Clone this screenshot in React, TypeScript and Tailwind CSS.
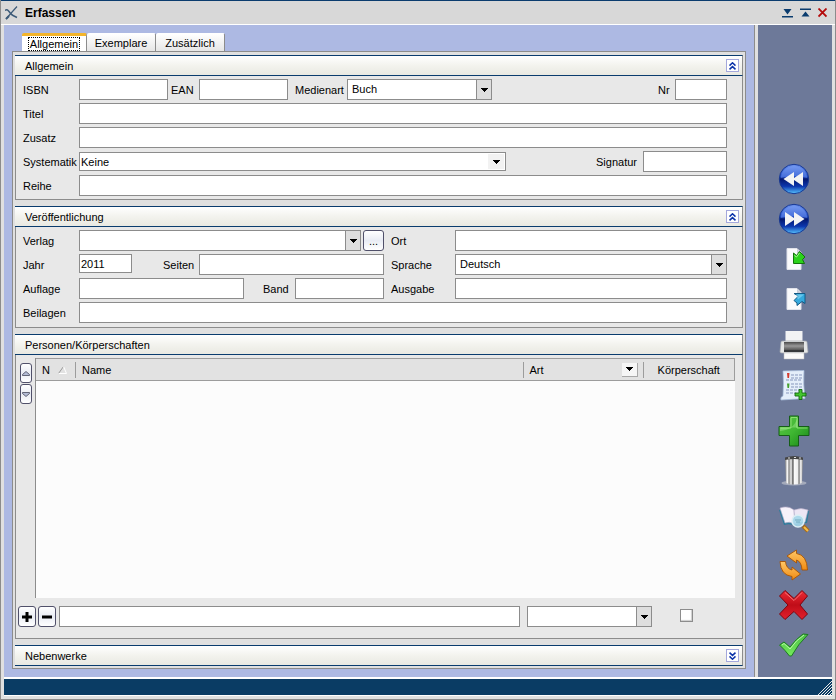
import { useState } from "react";
import type { ReactNode } from "react";

const INPUT = "min-w-0 border border-[#8c8c8c] bg-white outline-none";

/* ---------- form parts ---------- */

interface TextFieldProps {
  id: string;
  label: string;
  labelClass?: string;
  inputClass?: string;
  value?: string;
}

const TextField = ({ id, label, labelClass = "w-14", inputClass = "h-[21px] flex-1 px-1", value = "" }: TextFieldProps) => (
  <>
    <label htmlFor={id} className={`shrink-0 ${labelClass}`}>
      {label}
    </label>
    <input id={id} type="text" defaultValue={value} className={`${INPUT} ${inputClass}`} />
  </>
);

interface ComboProps {
  id: string;
  options: string[];
  className: string;
  flat?: boolean;
  ariaLabel?: string;
}

const Arrow = () => (
  <svg width="7" height="4" viewBox="0 0 7 4" shapeRendering="crispEdges">
    <path d="M0 0H7V1H6V2H5V3H4V4H3V3H2V2H1V1H0Z" fill="#000" />
  </svg>
);

const Combo = ({ id, options, className, flat, ariaLabel }: ComboProps) => (
  <div className={`relative border border-[#8c8c8c] bg-white ${className}`}>
    <select
      id={id}
      aria-label={ariaLabel}
      className={`block h-full w-full appearance-none bg-transparent outline-none ${flat ? "pl-px" : "pb-0.5 pl-1"}`}
    >
      {options.map((o) => (
        <option key={o}>{o}</option>
      ))}
    </select>
    <span
      className={
        flat
          ? "pointer-events-none absolute inset-y-px right-px flex w-4 items-center justify-center bg-[#f2f2f2]"
          : "pointer-events-none absolute inset-y-0 right-0 flex w-[15px] items-center justify-center border-l border-[#8c8c8c] bg-[#dedede]"
      }
    >
      <Arrow />
    </span>
  </div>
);

interface SmallButtonProps {
  label: string;
  className: string;
  children: ReactNode;
}

const SmallButton = ({ label, className, children }: SmallButtonProps) => (
  <button
    type="button"
    aria-label={label}
    className={`flex shrink-0 items-center justify-center rounded-[3px] border border-[#50506a] bg-linear-to-b from-white via-[#e9ecf4] to-white ${className}`}
  >
    {children}
  </button>
);

/* ---------- collapsible group ---------- */

interface GroupProps {
  title: string;
  toggle?: "up" | "down";
  className?: string;
  bodyClass?: string;
  children?: ReactNode;
}

const Group = ({ title, toggle, className = "", bodyClass = "", children }: GroupProps) => (
  <section className={`flex flex-col ${className}`}>
    <header className="flex h-[21px] shrink-0 items-center justify-between border-y border-r border-y-[#0a3c6e] border-r-[#8c8c8c] bg-linear-to-b from-white via-[#f3f3ee] to-[#e9e9e2] pr-[3px] pl-[10px]">
      <h2>{title}</h2>
      {toggle && (
        <button
          type="button"
          aria-label={toggle === "up" ? `${title} zuklappen` : `${title} aufklappen`}
          className="flex size-[13px] items-center justify-center border border-[#a4a8dc] bg-white"
        >
          <svg width="7" height="8" viewBox="0 0 7 8" fill="none" stroke="#0a32a8" strokeWidth="1.500">
            {toggle === "up" ? (
              <path d="M.5 3.600 3.500.8l3 2.800M.5 7.400l3-2.800 3 2.800" />
            ) : (
              <path d="M.5.6l3 2.800 3-2.800M.5 4.400l3 2.800 3-2.800" />
            )}
          </svg>
        </button>
      )}
    </header>
    {children && (
      <div className={`flex flex-col border-x border-b border-[#8c8c8c] bg-[#e8e8e8] ${bodyClass}`}>{children}</div>
    )}
  </section>
);

/* ---------- toolbar icons ---------- */

const RoundIcon = ({ forward }: { forward?: boolean }) => (
  <svg width="32" height="32" viewBox="0 0 32 32">
    <defs>
      <linearGradient id="ball" x1="0" y1="0" x2="0" y2="1">
        <stop offset="0" stopColor="#6d93ee" />
        <stop offset=".42" stopColor="#2350cb" />
        <stop offset=".5" stopColor="#04176d" />
        <stop offset=".75" stopColor="#0c37ae" />
        <stop offset="1" stopColor="#58c4ff" />
      </linearGradient>
    </defs>
    <circle cx="16" cy="16" r="14.700" fill="url(#ball)" stroke="#173790" />
    <path d="M3 15a13 12 0 0 1 26 0Q16 11 3 15Z" fill="#9ab8ff" opacity=".3" />
    <path
      d={forward ? "M7 9l9 6V9l10.500 7L16 23v-6l-9 6Z" : "M25 9l-9 6V9L5.500 16 16 23v-6l9 6Z"}
      fill="#f4f4f4"
    />
  </svg>
);

const PageIcon = ({ out }: { out?: boolean }) => (
  <svg width="32" height="32" viewBox="0 0 32 32">
    <path d="M9 5.500h10l4 4V26.500H9Z" fill="#fafafc" stroke="#e0e2ea" />
    <path d="M19 6v4h4Z" fill="#c8ccd8" />
    {out ? (
      <>
        <path d="M16 10.500h11v10l-3-2-5 4v-2.500l-3-2.500 4.500-4.500Z" fill="#35a9dd" stroke="#125a86" />
        <path d="M18 11.500h8l-6 5Z" fill="#8bdcf8" opacity=".6" />
      </>
    ) : (
      <>
        <path d="M15.500 20.500V10l3 2.500 3-4L27 14l-2.500 2.500 2 4Z" fill="#2bd21b" stroke="#12740c" />
        <path d="M16.500 12.500l2 1.500 3-4" fill="none" stroke="#a2f58e" />
      </>
    )}
  </svg>
);

const PrinterIcon = () => (
  <svg width="32" height="32" viewBox="0 0 32 32">
    <defs>
      <linearGradient id="prn" x1="0" y1="0" x2="0" y2="1">
        <stop offset="0" stopColor="#4a4a4a" />
        <stop offset=".5" stopColor="#999" />
        <stop offset="1" stopColor="#555" />
      </linearGradient>
    </defs>
    <path d="M7.500 2h17v12h-17Z" fill="#f2f3f4" />
    <path d="M3 13q0-1 2-1h22q2 0 2 1l1 10q0 1-2 1H4q-2 0-2-1Z" fill="#e4e6e6" stroke="#a4a8ae" strokeWidth=".7" />
    <path d="M6 13h20v8H6Z" fill="url(#prn)" />
    <path d="M6 21h20v2H6Z" fill="#36393c" />
    <path d="M6 24h20v6H6Z" fill="#fafafa" stroke="#bbb" strokeWidth=".5" />
  </svg>
);

const ListIcon = () => (
  <svg width="32" height="32" viewBox="0 0 32 32">
    <path d="M5 2l21-.5q-1 13 1 28L3 31q-1-3 2-4 1-13 0-25Z" fill="#e4eefa" stroke="#a9bfdc" strokeWidth=".7" />
    <path
      d="M13 6h11M13 9h11M8 11h16M13 15h11M13 18h11M8 21h14M8 24h10"
      stroke="#8797bd"
      strokeWidth="1"
      strokeDasharray="3 1"
    />
    <path d="M9 4h2.500L11 9H9.500Z" fill="#d43a2d" />
    <path d="M9 14.500h2.500l-.5 4.500H9.500Z" fill="#45a12e" />
    <path d="M21 20.500h3V24h4v3h-4v3.500h-3V27h-4v-3h4Z" fill="#43c52e" stroke="#12680e" strokeWidth=".9" />
  </svg>
);

const PlusIcon = () => (
  <svg width="32" height="32" viewBox="0 0 32 32">
    <defs>
      <linearGradient id="plus" x1="0" y1="0" x2="1" y2="1">
        <stop offset="0" stopColor="#5fc648" />
        <stop offset=".5" stopColor="#3fb632" />
        <stop offset="1" stopColor="#178416" />
      </linearGradient>
    </defs>
    <path d="M11.500 1h9v10.500H31v9H20.500V31h-9V20.500H1v-9h10.500Z" fill="url(#plus)" stroke="#155e17" />
    <path d="M13 2.500h6V13h10.500M2.500 13H13V3" fill="none" stroke="#a5ec8a" opacity=".7" />
    <path d="M2 12.500h17.500V2.500Q16 15 2 16Z" fill="#c4f5b0" opacity=".35" />
  </svg>
);

const TrashIcon = () => (
  <svg width="32" height="32" viewBox="0 0 32 32">
    <defs>
      <linearGradient id="bin">
        <stop offset="0" stopColor="#777" />
        <stop offset=".13" stopColor="#fff" />
        <stop offset=".22" stopColor="#888" />
        <stop offset=".34" stopColor="#eee" />
        <stop offset=".44" stopColor="#555" />
        <stop offset=".52" stopColor="#fafafa" />
        <stop offset=".7" stopColor="#eee" />
        <stop offset=".78" stopColor="#777" />
        <stop offset=".88" stopColor="#fff" />
        <stop offset="1" stopColor="#777" />
      </linearGradient>
    </defs>
    <ellipse cx="16" cy="28" rx="12.500" ry="2.500" fill="#a4aabb" />
    <path d="M7 3h18l-1 25q-8 3-16 0Z" fill="url(#bin)" />
    <path d="M7 2.500q9-3 18 0V5q-9-2-18 0Z" fill="#454545" />
    <path d="M10 3h2m4-.5h2m3 .5h2" stroke="#ddd" />
  </svg>
);

const BookIcon = () => (
  <svg width="32" height="32" viewBox="0 0 32 32">
    <path d="M1 7l5 15q6-2 11 1 5-3 12-3L31 8Z" fill="#2e7d9c" />
    <path d="M2 5q8-3 14 2l1 14q-6-3-10-1Z" fill="#f6f2fa" stroke="#b8adc9" strokeWidth=".6" />
    <path d="M16 7q7-3 14 0l-3 12q-6-1-10 2Z" fill="#ece6f4" stroke="#b8adc9" strokeWidth=".6" />
    <path d="M25 23l5 5" stroke="#a96b14" strokeWidth="4" />
    <path d="M26 24l4 4" stroke="#f4bd4d" strokeWidth="2" />
    <circle cx="20" cy="18" r="6" fill="#a5d7ea" fillOpacity=".9" stroke="#dceef4" strokeWidth="1.500" />
    <path d="M17 17h6m-5 2h4" stroke="#6ea8bd" />
  </svg>
);

const RefreshIcon = () => (
  <svg width="32" height="32" viewBox="0 0 32 32">
    <defs>
      <linearGradient id="turn" x1="0" y1="0" x2="0" y2="1">
        <stop offset="0" stopColor="#ffc766" />
        <stop offset="1" stopColor="#f08b12" />
      </linearGradient>
    </defs>
    <g fill="url(#turn)" stroke="#a65305" strokeWidth=".9">
      <path d="M9 7L18.500 1v3.500Q29 6 29.500 21H24q-.5-8.500-5.500-10V14Z" />
      <path d="M22.500 25L14 31v-3.500Q2.500 26 2 12.500h5.500q.5 7 6.500 8.500V18Z" />
    </g>
  </svg>
);

const CrossIcon = () => (
  <svg width="32" height="32" viewBox="0 0 32 32">
    <defs>
      <linearGradient id="cross" x1="0" y1="0" x2="0" y2="1">
        <stop offset="0" stopColor="#ec2c35" />
        <stop offset=".5" stopColor="#c00d18" />
        <stop offset="1" stopColor="#e2202c" />
      </linearGradient>
    </defs>
    <path d="M7 1.500l9 8 8-8 5.500 5.500-7.500 9 7.500 9-5.500 5.500-8-8-9 8L1.500 25 10 16 1.500 7Z" fill="url(#cross)" stroke="#7a0610" />
    <path d="M7 3.500l9 8 8-8" fill="none" stroke="#ff8a8a" opacity=".8" />
  </svg>
);

const CheckIcon = () => (
  <svg width="32" height="32" viewBox="0 0 32 32">
    <defs>
      <linearGradient id="check" x1="0" y1="0" x2="0" y2="1">
        <stop offset="0" stopColor="#4fc247" />
        <stop offset="1" stopColor="#74ea5c" />
      </linearGradient>
    </defs>
    <path d="M1.500 16L6 13l6 5Q18 10 25 5l5 .5Q20 15 13.500 27h-2Q7 21 1.500 16Z" fill="url(#check)" stroke="#1c7d20" />
    <path d="M4 16l2-1.500 6 5.500Q18 11 26 6" fill="none" stroke="#b8f8a8" />
  </svg>
);

const TOOLS: { label: string; gap: string; icon: ReactNode }[] = [
  { label: "Zurück", gap: "", icon: <RoundIcon /> },
  { label: "Vor", gap: "mt-2", icon: <RoundIcon forward /> },
  { label: "Importieren", gap: "mt-2", icon: <PageIcon /> },
  { label: "Exportieren", gap: "mt-2", icon: <PageIcon out /> },
  { label: "Drucken", gap: "mt-3.5", icon: <PrinterIcon /> },
  { label: "Zur Liste", gap: "mt-2", icon: <ListIcon /> },
  { label: "Neu", gap: "mt-3.5", icon: <PlusIcon /> },
  { label: "Löschen", gap: "mt-2", icon: <TrashIcon /> },
  { label: "Suchen", gap: "mt-4", icon: <BookIcon /> },
  { label: "Aktualisieren", gap: "mt-3.5", icon: <RefreshIcon /> },
  { label: "Abbrechen", gap: "mt-2", icon: <CrossIcon /> },
  { label: "Speichern", gap: "mt-2", icon: <CheckIcon /> },
];

const TABS = ["Allgemein", "Exemplare", "Zusätzlich"];

/* ---------- window ---------- */

const TitleBar = () => (
  <header className="flex h-[25px] shrink-0 items-center border-t border-b border-t-[#0a3c6e] border-b-white bg-[#d8d8d8] pr-2 pl-1">
    <svg width="13" height="14" viewBox="0 0 13 14" fill="none" stroke="#3c5a78">
      <path d="M12 .5Q7 6 1 13" strokeWidth="1.200" />
      <path d="M0 4.500q2-2 4 1t4 4 4 2" strokeWidth="1.400" />
      <path d="M1 13l3-3" strokeWidth="2" />
    </svg>
    <h1 className="ml-[7px] flex-1 text-[12px] font-bold">Erfassen</h1>
    <div className="flex gap-[7px]">
      <button type="button" aria-label="Nach unten">
        <svg width="11" height="10" viewBox="0 0 11 10" fill="#0a3c6e">
          <path d="M1.500 1h8L5.500 6.500ZM0 8h11v1.500H0Z" />
        </svg>
      </button>
      <button type="button" aria-label="Nach oben">
        <svg width="11" height="10" viewBox="0 0 11 10" fill="#0a3c6e">
          <path d="M0 .5h11V2H0ZM5.500 3.500l4 5h-8Z" />
        </svg>
      </button>
      <button type="button" aria-label="Schließen">
        <svg width="9" height="10" viewBox="0 0 9 10" fill="none" stroke="#b40a0a" strokeWidth="1.800">
          <path d="M.5 .5l8 8M8.500 .5l-8 8" />
        </svg>
      </button>
    </div>
  </header>
);

const PersonTable = () => (
  <div className="mt-[3px] flex flex-1 pr-[7px] pl-1">
    <div className="flex w-[15px] shrink-0 flex-col gap-px pt-[5px]">
      <SmallButton label="Nach oben" className="h-5 w-3">
        <svg width="8" height="5" viewBox="0 0 8 5">
          <path d="M.5 3.500L4 .5l3.500 3v1h-7Z" fill="#b4bcd6" stroke="#45475a" strokeWidth=".8" />
        </svg>
      </SmallButton>
      <SmallButton label="Nach unten" className="h-5 w-3">
        <svg width="8" height="5" viewBox="0 0 8 5">
          <path d="M.5 1.500L4 4.500l3.500-3v-1h-7Z" fill="#b4bcd6" stroke="#45475a" strokeWidth=".8" />
        </svg>
      </SmallButton>
    </div>
    <div className="flex-1 border-l border-[#8c8c8c] bg-[#fcfcfc]">
      <table className="w-full table-fixed border-collapse text-left">
        <thead>
          <tr className="h-[22px] border border-l-0 border-[#9c9c9c] bg-[#e2e2e2]">
            <th className="w-10 p-0 font-normal">
              <div className="flex h-4 items-center gap-2 border-r border-[#9c9c9c] pl-1.5">
                N
                <svg width="9" height="8" viewBox="0 0 9 8" fill="none">
                  <path d="M.5 7.500L5.500.5" stroke="#999" />
                  <path d="M5.500.5l3 7h-8" stroke="#fff" />
                </svg>
              </div>
            </th>
            <th className="p-0 font-normal">
              <div className="flex h-4 items-center border-r border-[#9c9c9c] pl-1.5">Name</div>
            </th>
            <th className="w-[120px] p-0 font-normal">
              <div className="flex h-4 items-center justify-between border-r border-[#9c9c9c] pr-[5px] pl-1.5">
                Art
                <button
                  type="button"
                  aria-label="Art filtern"
                  className="flex h-[14px] w-4 items-center justify-center border-r border-b border-[#a8a8a8] bg-[#f6f6f6]"
                >
                  <Arrow />
                </button>
              </div>
            </th>
            <th className="w-[91px] p-0 text-center font-normal">Körperschaft</th>
          </tr>
        </thead>
        <tbody />
      </table>
    </div>
  </div>
);

export default function App() {
  const [tab, setTab] = useState("Allgemein");

  return (
    <div className="flex min-h-screen flex-col border-x border-b border-[#8c8c8c] bg-[#e0e0e0] font-['Liberation_Sans',Arial,sans-serif] text-[11px] leading-4 text-black">
      <TitleBar />

      <div className="flex flex-1 px-[3px]">
        <main className="flex min-w-0 flex-1 flex-col border-r border-[#8c8c8c] bg-[#adb9e3] p-2">
          <div role="tablist" className="flex items-end pl-2.5">
            {TABS.map((name) => (
              <button
                key={name}
                type="button"
                role="tab"
                aria-selected={tab === name}
                onClick={() => setTab(name)}
                className={
                  tab === name
                    ? "flex h-[18px] w-[65px] items-center justify-center rounded-t-[2px] border-t-[3px] border-r border-t-[#f4b52c] border-r-[#8c8c8c] bg-white"
                    : "flex h-[18px] w-[69px] items-center justify-center rounded-t-[2px] border-t border-r border-t-white border-r-[#8c8c8c] bg-linear-to-b from-white to-[#e6e6e6]"
                }
              >
                <span className={tab === name ? "border border-dotted border-black px-px leading-3" : ""}>{name}</span>
              </button>
            ))}
          </div>

          <form className="flex flex-1 flex-col gap-1.5 border border-[#8c8c8c] bg-[#e0e0e0] px-0.5 pt-[3px] pb-0.5">
            <Group title="Allgemein" toggle="up" bodyClass="gap-[3px] py-[3px] pl-[7px] pr-[15px]">
              <div className="flex items-center">
                <TextField id="isbn" label="ISBN" inputClass="h-[21px] w-[89px] px-1" />
                <TextField id="ean" label="EAN" labelClass="ml-[3px] w-7" inputClass="h-[21px] w-[89px] px-1" />
                <label htmlFor="medienart" className="ml-[7px] w-[52px]">
                  Medienart
                </label>
                <Combo id="medienart" options={["Buch"]} className="h-[21px] w-[145px]" />
                <TextField id="nr" label="Nr" labelClass="ml-auto w-[17px]" inputClass="h-[21px] w-[52px] px-1" />
              </div>
              <div className="flex items-center">
                <TextField id="titel" label="Titel" />
              </div>
              <div className="flex items-center">
                <TextField id="zusatz" label="Zusatz" />
              </div>
              <div className="flex items-center">
                <label htmlFor="systematik" className="w-14">
                  Systematik
                </label>
                <Combo id="systematik" options={["Keine"]} flat className="h-[19px] flex-1" />
                <TextField id="signatur" label="Signatur" labelClass="ml-[90px] w-[47px]" inputClass="h-[21px] w-[84px] px-1" />
              </div>
              <div className="flex items-center">
                <TextField id="reihe" label="Reihe" />
              </div>
            </Group>

            <Group title="Veröffentlichung" toggle="up" bodyClass="gap-[3px] pt-[3px] pb-1 pl-[7px] pr-[15px]">
              <div className="flex items-center">
                <div className="flex w-[361px] items-center">
                  <label htmlFor="verlag" className="w-14">
                    Verlag
                  </label>
                  <Combo id="verlag" options={[""]} className="h-[21px] flex-1" />
                  <SmallButton label="Verlag auswählen" className="ml-0.5 h-[21px] w-[21px]">
                    ...
                  </SmallButton>
                </div>
                <TextField id="ort" label="Ort" labelClass="ml-[7px] w-16" />
              </div>
              <div className="flex items-center">
                <div className="flex w-[361px] items-center">
                  <TextField id="jahr" label="Jahr" inputClass="h-[19px] w-[53px] self-start px-px" value="2011" />
                  <TextField id="seiten" label="Seiten" labelClass="ml-[31px] w-9" />
                </div>
                <label htmlFor="sprache" className="ml-[7px] w-16">
                  Sprache
                </label>
                <Combo id="sprache" options={["Deutsch"]} className="h-[21px] flex-1" />
              </div>
              <div className="flex items-center">
                <div className="flex w-[361px] items-center">
                  <TextField id="auflage" label="Auflage" inputClass="h-[21px] w-[165px] px-1" />
                  <TextField id="band" label="Band" labelClass="ml-[19px] w-8" />
                </div>
                <TextField id="ausgabe" label="Ausgabe" labelClass="ml-[7px] w-16" />
              </div>
              <div className="flex items-center">
                <TextField id="beilagen" label="Beilagen" />
              </div>
            </Group>

            <Group title="Personen/Körperschaften" className="flex-1" bodyClass="flex-1">
              <PersonTable />
              <div className="flex items-center pt-2 pr-[15px] pb-[11px] pl-0.5">
                <SmallButton label="Hinzufügen" className="h-[21px] w-[18px]">
                  <svg width="10" height="10" viewBox="0 0 10 10">
                    <path d="M5 0v10M0 5h10" stroke="#000" strokeWidth="3" />
                  </svg>
                </SmallButton>
                <SmallButton label="Entfernen" className="ml-0.5 h-[21px] w-[18px]">
                  <svg width="10" height="10" viewBox="0 0 10 10">
                    <path d="M0 5h10" stroke="#000" strokeWidth="3" />
                  </svg>
                </SmallButton>
                <input type="text" aria-label="Name" className={`${INPUT} ml-[3px] h-[21px] flex-1 px-1`} />
                <Combo id="art" ariaLabel="Art" options={[""]} className="ml-[7px] h-[21px] w-[125px]" />
                <input
                  type="checkbox"
                  aria-label="Körperschaft"
                  className="mr-[34px] mb-0.5 ml-7 size-[13px] appearance-none border border-[#8c8c8c] bg-white shadow-[inset_-1px_-1px_1px_#ccc] checked:bg-[#0a3c6e]"
                />
              </div>
            </Group>

            <Group title="Nebenwerke" toggle="down" />
          </form>
        </main>

        <nav aria-label="Werkzeuge" className="ml-[3px] flex w-[74px] flex-col items-center bg-[#6d7999] pt-[138px] pr-0.5">
          {TOOLS.map((tool) => (
            <button key={tool.label} type="button" aria-label={tool.label} className={`size-8 ${tool.gap}`}>
              {tool.icon}
            </button>
          ))}
        </nav>
      </div>

      <footer className="mx-[3px] mb-[3px] flex h-[19px] shrink-0 items-end justify-end border-t-2 border-b border-white bg-[#0a3c64]">
        <svg width="14" height="14" viewBox="0 0 14 14" stroke="#e8e8e8" strokeWidth="1">
          <path d="M0 14L14 0M3 14L14 3M6 14l8-8M9 14l5-5M12 14l2-2" />
        </svg>
      </footer>
    </div>
  );
}
